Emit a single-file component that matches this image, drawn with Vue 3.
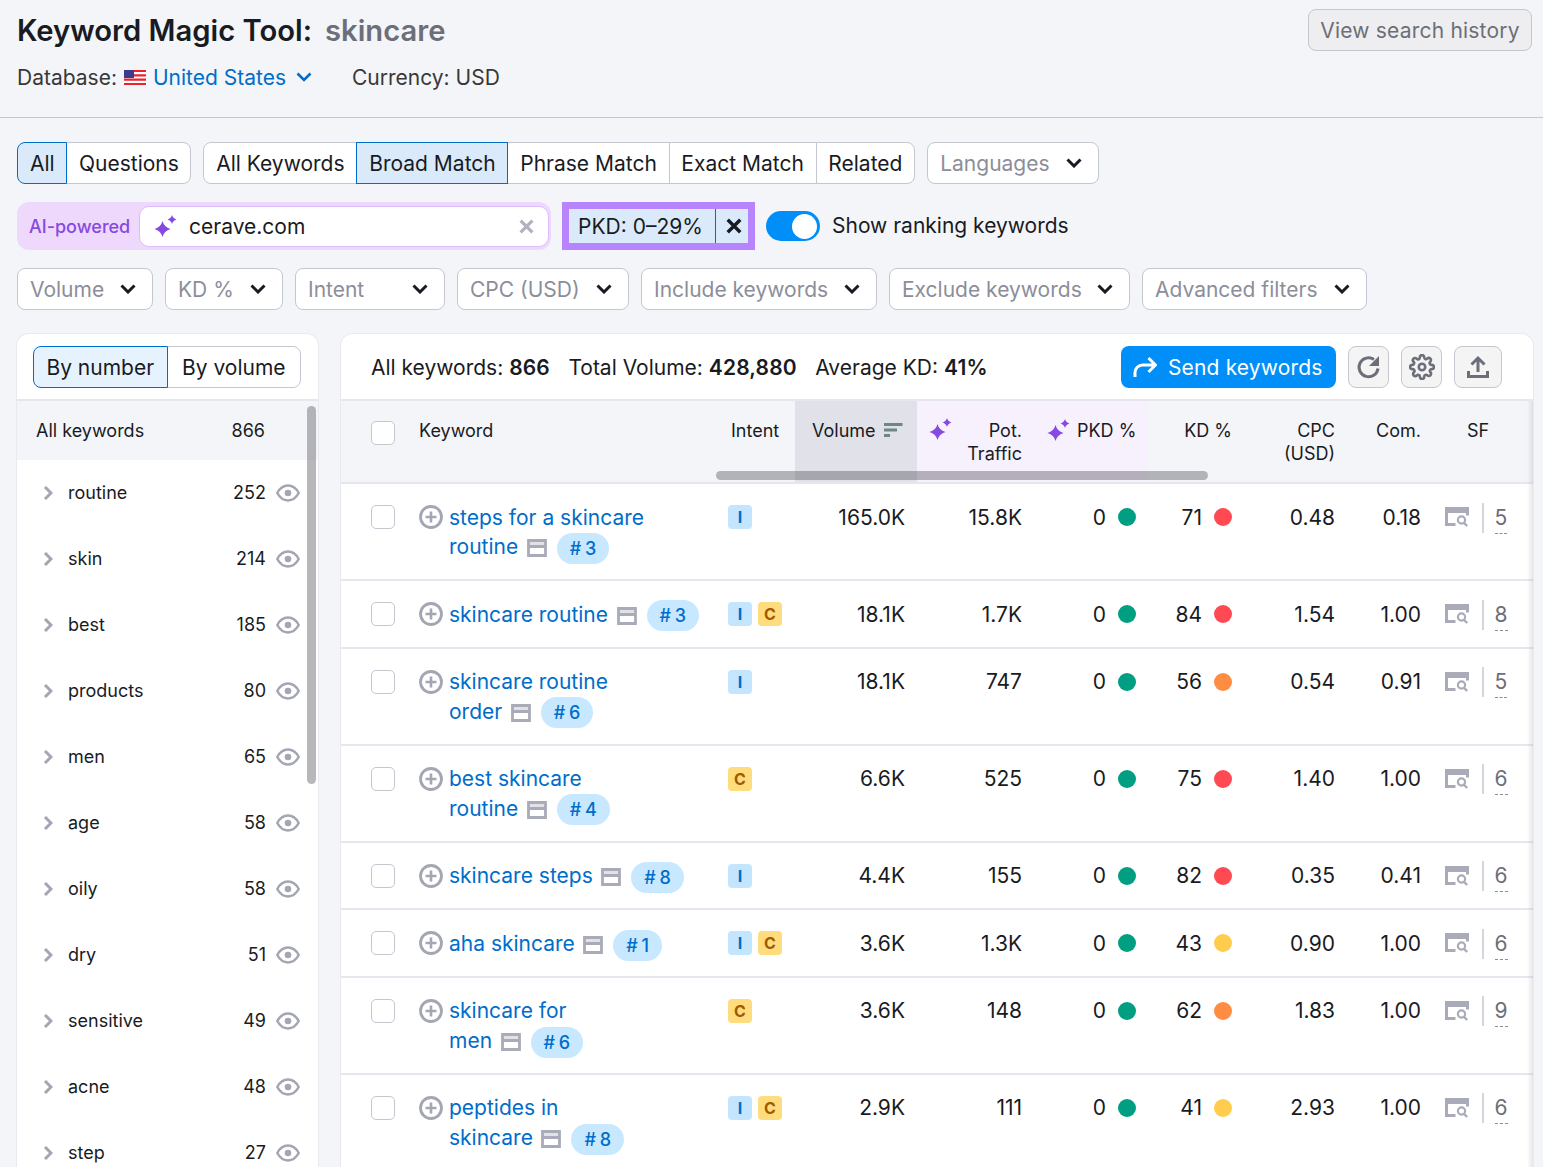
<script setup>
const filters = [
  { label: 'Volume', width: 136 },
  { label: 'KD %', width: 118 },
  { label: 'Intent', width: 150 },
  { label: 'CPC (USD)', width: 172 },
  { label: 'Include keywords', width: 236 },
  { label: 'Exclude keywords', width: 241 },
  { label: 'Advanced filters', width: 225 },
]
const groups = [
  ['routine', 252], ['skin', 214], ['best', 185], ['products', 80], ['men', 65], ['age', 58],
  ['oily', 58], ['dry', 51], ['sensitive', 49], ['acne', 48], ['step', 27],
]
const rows = [
  { lead: 'steps for a skincare', last: 'routine', rank: 3, intents: ['I'], vol: '165.0K', pot: '15.8K', kd: 71, kc: 'red', cpc: '0.48', com: '0.18', sf: 5 },
  { lead: 'skincare', last: 'routine', rank: 3, intents: ['I', 'C'], vol: '18.1K', pot: '1.7K', kd: 84, kc: 'red', cpc: '1.54', com: '1.00', sf: 8 },
  { lead: 'skincare routine', last: 'order', rank: 6, intents: ['I'], vol: '18.1K', pot: '747', kd: 56, kc: 'orange', cpc: '0.54', com: '0.91', sf: 5 },
  { lead: 'best skincare', last: 'routine', rank: 4, intents: ['C'], vol: '6.6K', pot: '525', kd: 75, kc: 'red', cpc: '1.40', com: '1.00', sf: 6 },
  { lead: 'skincare', last: 'steps', rank: 8, intents: ['I'], vol: '4.4K', pot: '155', kd: 82, kc: 'red', cpc: '0.35', com: '0.41', sf: 6 },
  { lead: 'aha', last: 'skincare', rank: 1, intents: ['I', 'C'], vol: '3.6K', pot: '1.3K', kd: 43, kc: 'yellow', cpc: '0.90', com: '1.00', sf: 6 },
  { lead: 'skincare for', last: 'men', rank: 6, intents: ['C'], vol: '3.6K', pot: '148', kd: 62, kc: 'orange', cpc: '1.83', com: '1.00', sf: 9 },
  { lead: 'peptides in', last: 'skincare', rank: 8, intents: ['I', 'C'], vol: '2.9K', pot: '111', kd: 41, kc: 'yellow', cpc: '2.93', com: '1.00', sf: 6 },
]
const sparkle = 'M8.500 6Q10 12 16.500 14 10 16 8.500 22 7 16 .5 14 7 12 8.500 6ZM18 0Q18.800 3.200 22.500 4.500 18.800 5.800 18 9 17.200 5.800 13.500 4.500 17.200 3.200 18 0Z'
</script>

<template>
  <div class="page">
    <header class="top">
      <div class="title-col">
        <h1 class="title">Keyword Magic Tool:<span class="query">skincare</span></h1>
        <div class="meta">
          <span>Database:</span>
          <svg class="flag" viewBox="0 0 22 15" width="22" height="15">
            <rect width="22" height="15" fill="#fff" />
            <path d="M0 0h22v2.100H0zM0 4.300h22v2.100H0zM0 8.600h22v2.100H0zM0 12.900h22V15H0z" fill="#e8232f" />
            <rect width="10" height="8" fill="#3c3b8e" />
          </svg>
          <span class="db-link">United States</span>
          <svg class="db-chev" viewBox="0 0 16 10" width="16" height="10"><path d="M1.500 1.500 8 8l6.500-6.500" fill="none" stroke="#006dca" stroke-width="2.600" /></svg>
          <span class="currency">Currency: USD</span>
        </div>
      </div>
      <button class="history">View search history</button>
    </header>

    <main class="main">
      <div class="controls">
        <div class="seg">
          <button class="seg-btn on roomy">All</button>
          <button class="seg-btn tight">Questions</button>
        </div>
        <div class="seg">
          <button class="seg-btn roomy">All Keywords</button>
          <button class="seg-btn on">Broad Match</button>
          <button class="seg-btn">Phrase Match</button>
          <button class="seg-btn">Exact Match</button>
          <button class="seg-btn">Related</button>
        </div>
        <button class="drop lang">
          <span>Languages</span>
          <svg class="chev" viewBox="0 0 16 10" width="16" height="10"><path d="M1.500 1.500 8 8l6.500-6.500" fill="none" stroke="#191b23" stroke-width="3" /></svg>
        </button>
      </div>

      <div class="controls ai-row">
        <div class="ai">
          <span class="ai-label">AI-powered</span>
          <div class="ai-input">
            <svg viewBox="0 0 23 22" width="23" height="22"><path :d="sparkle" fill="#8649e1" /></svg>
            <span class="ai-text">cerave.com</span>
            <svg class="ai-x" viewBox="0 0 14 14" width="15" height="15"><path d="M1.500 1.500l11 11M12.500 1.500l-11 11" stroke="#b0b2bf" stroke-width="3" /></svg>
          </div>
        </div>
        <div class="pkd">
          <span class="pkd-text">PKD: 0–29%</span>
          <span class="pkd-x">
            <svg viewBox="0 0 14 14" width="16" height="16"><path d="M1.500 1.500l11 11M12.500 1.500l-11 11" stroke="#191b23" stroke-width="3" /></svg>
          </span>
        </div>
        <span class="toggle"><span class="knob"></span></span>
        <span class="toggle-label">Show ranking keywords</span>
      </div>

      <div class="controls">
        <button v-for="f in filters" :key="f.label" class="drop" :style="{ width: f.width + 'px' }">
          <span>{{ f.label }}</span>
          <svg class="chev" viewBox="0 0 16 10" width="16" height="10"><path d="M1.500 1.500 8 8l6.500-6.500" fill="none" stroke="#191b23" stroke-width="3" /></svg>
        </button>
      </div>

      <div class="panels">
        <aside class="side">
          <div class="side-head">
            <div class="seg side-seg">
              <button class="seg-btn on light">By number</button>
              <button class="seg-btn">By volume</button>
            </div>
          </div>
          <div class="side-all"><span>All keywords</span><span class="all-count">866</span></div>
          <div v-for="g in groups" :key="g[0]" class="side-row">
            <svg class="side-chev" viewBox="0 0 10 14" width="10" height="14"><path d="M2 1 8 7 2 13" fill="none" stroke="#a4a6b4" stroke-width="3" /></svg>
            <span class="side-name">{{ g[0] }}</span>
            <span class="side-num">{{ g[1] }}</span>
            <svg class="eye" viewBox="0 0 24 18" width="24" height="18"><path d="M1.300 9C4 4 7.700 1.600 12 1.600S20 4 22.700 9C20 14 16.300 16.400 12 16.400S4 14 1.300 9Z" fill="none" stroke="#a4a6b4" stroke-width="2.500" /><circle cx="12" cy="9" r="3.300" fill="#a4a6b4" /></svg>
          </div>
          <div class="side-bar"></div>
        </aside>

        <section class="table">
          <div class="summary">
            <div class="stats">
              <span>All keywords: <b>866</b></span>
              <span>Total Volume: <b>428,880</b></span>
              <span>Average KD: <b>41%</b></span>
            </div>
            <button class="send">
              <svg viewBox="0 0 24 22" width="24" height="22"><path d="M2 21v-4.500A7.500 7.500 0 0 1 9.500 9H22M15.500 2 22.500 9 15.500 16" fill="none" stroke="#fff" stroke-width="3" /></svg>
              <span>Send keywords</span>
            </button>
            <button class="tool">
              <svg viewBox="0 0 26 26" width="26" height="26"><path d="M22 14.500A9.500 9.500 0 1 1 18 5.500" fill="none" stroke="#6c6e79" stroke-width="3" /><path d="M23 2v10h-10z" fill="#6c6e79" /></svg>
            </button>
            <button class="tool">
              <svg viewBox="0 0 24 24" width="26" height="26" fill="none" stroke="#6c6e79" stroke-width="2.400"><circle cx="12" cy="12" r="3" /><path d="M19.400 15a1.650 1.650 0 0 0 .33 1.820l.06.06a2 2 0 1 1-2.830 2.830l-.06-.06a1.650 1.650 0 0 0-2.820 1.170V21a2 2 0 1 1-4 0v-.09a1.650 1.650 0 0 0-2.820-1.150l-.06.06a2 2 0 1 1-2.830-2.830l.06-.06A1.650 1.650 0 0 0 3.090 14H3a2 2 0 1 1 0-4h.09a1.650 1.650 0 0 0 1.170-2.820l-.06-.06a2 2 0 1 1 2.830-2.830l.06.06A1.650 1.650 0 0 0 10 3.090V3a2 2 0 1 1 4 0v.09a1.650 1.650 0 0 0 2.820 1.170l.06-.06a2 2 0 1 1 2.830 2.830l-.06.06A1.650 1.650 0 0 0 20.910 10H21a2 2 0 1 1 0 4h-.09a1.650 1.650 0 0 0-1.510 1Z" /></svg>
            </button>
            <button class="tool wide">
              <svg viewBox="0 0 24 24" width="24" height="24" fill="none" stroke="#6c6e79" stroke-width="3"><path d="M12 17V3M5.500 9.500 12 3l6.500 6.500M2.500 16v5.500h19V16" /></svg>
            </button>
          </div>

          <div class="grid head">
            <div class="c-check"><span class="box"></span></div>
            <div class="h-key">Keyword</div>
            <div class="h-intent">Intent</div>
            <div class="h-vol">
              <span>Volume</span>
              <svg viewBox="0 0 19 15" width="19" height="15"><path d="M0 1.500h18.500M0 7h13M0 12.500h6" stroke="#6e8589" stroke-width="2.800" /></svg>
            </div>
            <div class="h-pot">
              <svg class="spark" viewBox="0 0 23 22" width="23" height="22"><path :d="sparkle" fill="#8649e1" /></svg>
              <span>Pot.<br />Traffic</span>
            </div>
            <div class="h-pkd">
              <svg viewBox="0 0 23 22" width="23" height="22"><path :d="sparkle" fill="#8649e1" /></svg>
              <span>PKD %</span>
            </div>
            <div class="h-kd">KD %</div>
            <div class="h-cpc">CPC<br />(USD)</div>
            <div class="h-com">Com.</div>
            <div class="h-sf">SF</div>
            <div class="hscroll"></div>
          </div>

          <div v-for="r in rows" :key="r.lead + r.last" class="grid row">
            <div class="c-check"><span class="box"></span></div>
            <div class="c-key">
              <svg class="plus" viewBox="0 0 24 24" width="24" height="24"><circle cx="12" cy="12" r="10.500" fill="none" stroke="#a4a6b4" stroke-width="2.800" /><path d="M12 6.500v11M6.500 12h11" stroke="#a4a6b4" stroke-width="2.600" /></svg>
              <div class="key-text">
                <span class="link">{{ r.lead }}</span>{{ ' ' }}<span class="nowrap"><span class="link">{{ r.last }}</span><svg class="page-ic" viewBox="0 0 20 18" width="20" height="18"><path d="M1.500 1.500h17v15h-17zM1.500 7.500h17" fill="none" stroke="#a9abb8" stroke-width="2.800" /><path d="M2 2h16v5H2z" fill="#a9abb8" opacity=".35" /></svg><span class="rank"># {{ r.rank }}</span></span>
              </div>
            </div>
            <div class="c-intent">
              <span v-for="i in r.intents" :key="i" class="chip" :class="i === 'I' ? 'chip-i' : 'chip-c'">{{ i }}</span>
            </div>
            <div class="num c-vol">{{ r.vol }}</div>
            <div class="num c-pot">{{ r.pot }}</div>
            <div class="num c-pkd"><span>0</span><i class="dot green"></i></div>
            <div class="num c-kd"><span>{{ r.kd }}</span><i class="dot" :class="r.kc"></i></div>
            <div class="num c-cpc">{{ r.cpc }}</div>
            <div class="num c-com">{{ r.com }}</div>
            <div class="c-sf">
              <svg viewBox="0 0 24 20" width="24" height="20"><path d="M10.500 17.500H1.500v-16h21v7" fill="none" stroke="#a9abb8" stroke-width="3" /><path d="M2 2h20v4H2z" fill="#a9abb8" /><circle cx="16.500" cy="13" r="3.600" fill="none" stroke="#a9abb8" stroke-width="2.200" /><path d="M19 15.800l3.200 3.200" stroke="#a9abb8" stroke-width="2.400" /></svg>
              <span class="sf-line"></span>
              <span class="sf-num">{{ r.sf }}</span>
            </div>
          </div>
          <div class="edge"></div>
        </section>
      </div>
    </main>
  </div>
</template>

<style>
html, body { margin: 0; background: #f4f5f9; overflow: hidden; }
</style>

<style scoped>
.page {
  height: 1167px;
  overflow: hidden;
  background: #f4f5f9;
  color: #191b23;
  font-family: Inter, "Liberation Sans", sans-serif;
  font-size: 21px;
}
button { font-family: inherit; font-size: 21px; color: inherit; cursor: pointer; }
.top {
  height: 117px;
  border-bottom: 1px solid #c4c7cf;
  display: flex;
  justify-content: space-between;
  padding: 0 11px 0 17px;
}
.title { margin: 13px 0 0; font-size: 29.2px; line-height: 36px; font-weight: 600; }
.query { margin-left: 13px; color: #6c6e79; }
.meta { display: flex; align-items: center; margin-top: 13px; height: 30px; color: #383838; }
.flag { margin: 0 7px 0 7px; }
.db-link { color: #006dca; }
.db-chev { margin: 0 40px 0 10px; }
.history {
  margin-top: 9px;
  width: 224px;
  height: 42px;
  background: #eeeef0;
  border: 1px solid #c4c7cf;
  border-radius: 8px;
  color: #6c6e79;
  padding: 0;
  letter-spacing: .2px;
}
.main { padding: 24px 10px 0 17px; }
.controls { display: flex; gap: 12px; margin-bottom: 18px; }
.seg { display: flex; height: 42px; }
.seg-btn {
  height: 42px;
  padding: 0 11.75px;
  background: #fff;
  border: 1px solid #c4c7cf;
  margin-left: -1px;
  white-space: nowrap;
}
.seg-btn.roomy { padding: 0 11.9px; }
.seg-btn.tight { padding: 0 11.5px; }
.seg-btn:first-child { margin-left: 0; border-radius: 8px 0 0 8px; }
.seg-btn:last-child { border-radius: 0 8px 8px 0; }
.seg-btn.on { background: #dbeafa; border-color: #006dca; position: relative; z-index: 1; }
.seg-btn.on.light { background: #e6f3ff; }
.drop {
  height: 42px;
  box-sizing: border-box;
  background: #fff;
  border: 1px solid #c4c7cf;
  border-radius: 8px;
  padding: 0 16px 0 12px;
  display: flex;
  align-items: center;
  justify-content: space-between;
  color: #8b8e9a;
  white-space: nowrap;
}
.lang { width: 172px; }
.chev { flex: none; }
.ai-row { align-items: center; height: 48px; gap: 0; }
.ai {
  width: 534px;
  height: 48px;
  box-sizing: border-box;
  background: #eed9fd;
  border-radius: 12px;
  display: flex;
  align-items: center;
  padding: 0 2px 0 12px;
}
.ai-label { color: #8649e1; font-size: 18px; font-weight: 500; width: 110px; flex: none; white-space: nowrap; }
.ai-input {
  flex: 1;
  height: 41px;
  box-sizing: border-box;
  background: #fff;
  border: 1px solid #dcbcfb;
  border-radius: 10px;
  display: flex;
  align-items: center;
  padding: 0 14px 0 14px;
}
.ai-text { margin-left: 12px; flex: 1; }
.pkd {
  margin-left: 11px;
  width: 193px;
  height: 48px;
  box-sizing: border-box;
  border: 7px solid #b884fd;
  background: #dbeafa;
  display: flex;
  align-items: center;
}
.pkd-text { padding-left: 9px; width: 146px; box-sizing: border-box; white-space: nowrap; }
.pkd-x { flex: 1; height: 100%; border-left: 1px solid #006dca; display: flex; align-items: center; justify-content: center; padding-left: 3px; }
.toggle {
  margin-left: 11px;
  width: 54px;
  height: 30px;
  border-radius: 15px;
  background: #008ff8;
  display: flex;
  align-items: center;
  justify-content: flex-end;
  padding-right: 3px;
  box-sizing: border-box;
}
.knob { width: 25px; height: 25px; border-radius: 50%; background: #fff; }
.toggle-label { margin-left: 12px; white-space: nowrap; padding-bottom: 2px; }
.panels { display: flex; gap: 23px; align-items: flex-start; margin-top: 24px; }
.side, .table {
  position: relative;
  background: #fff;
  border-radius: 12px 12px 0 0;
  box-shadow: 0 0 0 1px #e9eaf0;
  overflow: hidden;
}
.side { width: 301px; flex: none; font-size: 18px; height: 860px; }
.side-head { border-bottom: 2px solid #e6e7ee; padding: 12px 0 0 16px; box-sizing: border-box; height: 67px; }
.side-seg { width: 268px; }
.side-seg .seg-btn { flex: 1; padding: 0; }
.side-all {
  height: 59px;
  box-sizing: border-box;
  background: #f4f5f9;
  display: flex;
  justify-content: space-between;
  align-items: center;
  padding: 0 53px 1px 19px;
}
.side-row { height: 66px; box-sizing: border-box; display: flex; align-items: center; padding: 0 18px 1px 26px; }
.side-chev { margin-right: 15px; flex: none; }
.side-name { flex: 1; }
.side-num { margin-right: 10px; }
.side-bar {
  position: absolute;
  left: 290px;
  top: 72px;
  width: 9px;
  height: 378px;
  border-radius: 5px;
  background: rgba(85, 85, 95, .42);
}
.table { width: 1192px; flex: none; height: 860px; }
.summary { box-sizing: border-box; padding: 12px 31px 0 30px; display: flex; border-bottom: 2px solid #e6e7ee; height: 67px; }
.stats { flex: 1; display: flex; gap: 18.5px; height: 42px; align-items: center; white-space: nowrap; }
.stats b { font-weight: 600; letter-spacing: .15px; }
.send {
  width: 215px;
  height: 42px;
  border: 0;
  border-radius: 8px;
  background: #008ff8;
  color: #fff;
  display: flex;
  align-items: center;
  padding: 0 12px;
  gap: 11px;
  white-space: nowrap;
  letter-spacing: .15px;
}
.tool {
  margin-left: 12px;
  width: 41px;
  height: 42px;
  padding: 0;
  background: #f4f4f5;
  border: 1px solid #c4c7cf;
  border-radius: 8px;
  display: flex;
  align-items: center;
  justify-content: center;
}
.tool.wide { width: 48px; }
.grid {
  display: grid;
  grid-template-columns: 78px 309px 67px 122px 117px 113px 100px 100px 86px 100px;
}
.head { position: relative; height: 81px; background: #f4f5f9; border-bottom: 2px solid #e6e7ee; font-size: 18px; line-height: 23.5px; }
.head > div:not(.hscroll) { padding-top: 17.5px; }
.c-check { padding-left: 30px; box-sizing: border-box; }
.head .c-check { padding-top: 20px !important; }
.box { display: block; width: 24px; height: 24px; box-sizing: border-box; background: #fff; border: 1px solid #c4c7cf; border-radius: 5px; }
.h-intent { padding-left: 3px; }
.h-vol { background: #e0e1e9; padding-left: 17px; display: flex; gap: 8px; align-items: flex-start; }
.h-vol svg { margin-top: 4px; }
.h-pot { background: #f7f1fe; padding-right: 12px; text-align: right; position: relative; }
.spark { position: absolute; left: 12px; top: 17px; }
.h-pkd { background: #f7f1fe; padding-left: 13px; display: flex; gap: 7px; align-items: flex-start; }
.h-kd { padding-right: 15px; text-align: right; }
.h-cpc, .h-com { padding-right: 12px; text-align: right; }
.h-sf { padding-left: 34px; }
.hscroll {
  position: absolute;
  left: 375px;
  top: 70px;
  width: 492px;
  height: 9px;
  border-radius: 5px;
  background: rgba(70, 70, 80, .38);
}
.row { border-bottom: 2px solid #e6e7ee; padding: 18.67px 0 17.67px; line-height: 29.33px; }
.row .c-check { padding-top: 2.6px; }
.c-key { display: flex; }
.plus { flex: none; margin: 2.6px 6px 0 0; }
.key-text { width: 252px; }
.link { color: #006dca; }
.nowrap { white-space: nowrap; }
.page-ic { margin: 0 10px 0 8.5px; vertical-align: -3px; }
.rank {
  display: inline-block;
  height: 31px;
  line-height: 32px;
  margin: -5px 0;
  padding: 0 13px;
  border-radius: 16px;
  background: #c7e8ff;
  color: #006dca;
  font-size: 18px;
  font-weight: 500;
  vertical-align: middle;
  word-spacing: -1px;
}
.c-intent { display: flex; gap: 6px; align-items: flex-start; padding-top: 2.6px; }
.chip { width: 24px; height: 24px; border-radius: 4px; display: flex; align-items: center; justify-content: center; font-size: 16px; font-weight: 700; line-height: 24px; }
.chip-i { background: #c4e5fe; color: #006dca; }
.chip-c { background: #ffdd7e; color: #a05a00; }
.num { text-align: right; padding-right: 12px; }
.c-pkd, .c-kd { display: flex; justify-content: flex-end; gap: 12px; }
.c-pkd { padding-right: 11px; }
.c-kd { padding-right: 15px; }
.dot { width: 18px; height: 18px; border-radius: 50%; margin-top: 5.6px; flex: none; }
.green { background: #009f81; }
.red { background: #ff4953; }
.orange { background: #ff8c43; }
.yellow { background: #ffcc4d; }
.c-sf { display: flex; align-items: flex-start; padding-left: 12px; height: 29px; align-self: start; }
.c-sf svg { margin-top: 4.6px; }
.sf-line { width: 2px; height: 30px; background: #d5d6dd; margin: 0 11px 0 12.5px; }
.sf-num { color: #6c6e79; line-height: 30px; height: 30px; border-bottom: 1px dashed #8b8e9a; }
.edge {
  position: absolute;
  right: 0;
  top: 67px;
  bottom: 0;
  width: 6px;
  background: linear-gradient(to right, rgba(120, 120, 135, 0), rgba(120, 120, 135, .18));
}
</style>
